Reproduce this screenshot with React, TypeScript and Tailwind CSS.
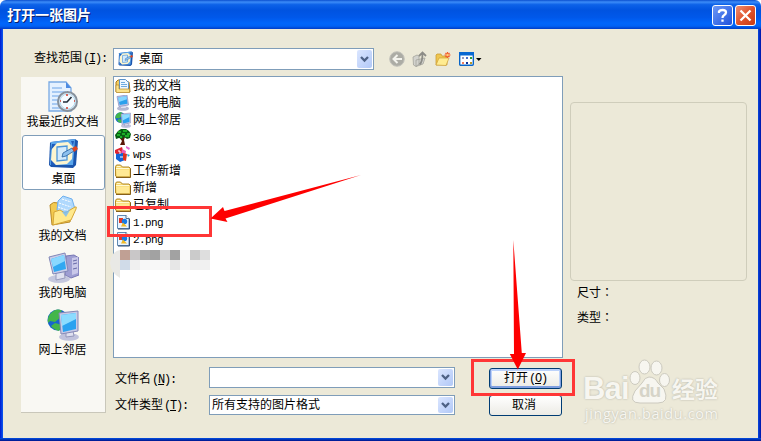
import type { ReactNode } from "react";

const CJK = "font-['Liberation_Sans','Noto_Sans_CJK_SC',sans-serif]";
const MONO = "font-['Liberation_Mono','Noto_Sans_CJK_SC',monospace] text-[11px] tracking-[-0.6px]";
const KEY = "font-['Liberation_Mono','Noto_Sans_CJK_SC',monospace] text-[12px] tracking-[-1.2px]";

function Key({ k, colon }: { k: string; colon?: boolean }) {
  return (
    <span className={`${KEY} ml-px`}>
      (<span className="underline underline-offset-1">{k}</span>){colon ? ":" : ""}
    </span>
  );
}

function DesktopIcon({ size }: { size: number }) {
  return (
    <svg width={size} height={size} viewBox="0 0 32 32">
      <path d="M3 4 27 1 30 3 28 27 25 30 3 29 1 27 2 5z" fill="#1b55ad" />
      <path d="M3 4 27 1 25 27 2 27z" fill="#5aa6ec" />
      <path d="M4 6h4l-5 6zM23 3h3l-1 5zM3 21l5 6H3z" fill="#1f5cbc" />
      <path d="M9 5 20 4l5 5-1 12-5 5-11 1-5-5 1-11z" fill="#fdf5cf" />
      <path d="M9 9l10-1v14L9 23z" fill="#d3eafc" stroke="#4b95da" strokeWidth="1.300" />
      <path d="m15 15-1 4 4-1 8-5-2-3z" fill="#8cc0ee" stroke="#24609f" strokeWidth=".8" />
      <path d="m24 10 4-2 2 3-4 3z" fill="#e0451f" />
    </svg>
  );
}

function RecentIcon() {
  return (
    <svg width="32" height="32" viewBox="0 0 32 32">
      <path d="M2 1h17l5 6v23H2z" fill="#e4f1ff" stroke="#78a9e4" strokeWidth="1.300" />
      <path d="m19 1 5 6h-5z" fill="#4d8be2" />
      <path d="M5 7h10M5 11h14M5 15h10M5 19h6M5 23h6M5 27h8" stroke="#93bdf0" strokeWidth="1.500" />
      <circle cx="20.500" cy="20.500" r="9.500" fill="#dceaf3" stroke="#87919c" strokeWidth="2" />
      <circle cx="20.500" cy="20.500" r="7.500" fill="#f5fbff" stroke="#b4d8ee" />
      <path d="m24.500 16-4.500 5h-4" stroke="#222d38" strokeWidth="1.600" fill="none" />
      <path d="M20 13v2M20 28v-2M13 20h1M28 20h-1" stroke="#d53a28" strokeWidth="1.500" />
    </svg>
  );
}

function DocsIcon() {
  return (
    <svg width="32" height="32" viewBox="0 0 32 32">
      <path d="M3 10q3-4 8-2l15 2-3 17-18 3z" fill="#f3ca50" stroke="#b98a27" />
      <path d="M16 1 25 4l3 10-9 9-9-8 1-9z" fill="#b0d9fd" stroke="#6fb0ee" />
      <path d="m15 4 9 3M12 8l12 4M11 12l12 4" stroke="#fff" strokeDasharray="2 1" />
      <path d="m7 17 6-2 5 3 10-6q2-1 1 2l-5 11L6 30z" fill="#ffe98c" stroke="#d6a637" />
      <path d="m15 17 8-2-4 7z" fill="#79bcf4" opacity=".85" />
    </svg>
  );
}

function ComputerIcon() {
  return (
    <svg width="32" height="32" viewBox="0 0 32 32">
      <path d="m19 4 8-1 5 3v17l-8 3-6-3z" fill="#9e9ed2" stroke="#7777b4" />
      <path d="m25 6 6-1v16l-6 2z" fill="#c9c8e9" />
      <path d="m26 9 4-1M26 12l4-1M26 17l4-1" stroke="#6769a7" />
      <ellipse cx="12" cy="27" rx="11" ry="4" fill="#c4c7de" />
      <path d="m9 20 8-1 1 7-9 2z" fill="#dfe1f0" stroke="#999cbd" />
      <path d="m2 5 16-4 3 18L6 22z" fill="#cbcde8" stroke="#8187b8" />
      <path d="m4 7 13-4 2 14L7 20z" fill="#31a8f1" />
      <path d="m4 7 13-4 1 6-12 6z" fill="#89d8ff" />
    </svg>
  );
}

function SmallComputerIcon() {
  return (
    <svg width="16" height="16" viewBox="0 0 16 16">
      <ellipse cx="8" cy="13.500" rx="6" ry="2.300" fill="#b3b7d2" />
      <path d="M6 9h4l1 4H6z" fill="#dcdff0" />
      <path d="m2 1.500 10-1.500 1.500 10L4 11.500z" fill="#c3c7e8" stroke="#8089c0" strokeWidth=".7" />
      <path d="m3 2.500 8.500-1.300 1 7.500L4.700 10z" fill="#2ba0ec" />
      <path d="m3 2.500 8.500-1.300.4 3L4 7z" fill="#86d6ff" />
    </svg>
  );
}

function NetworkIcon({ size }: { size: number }) {
  return (
    <svg width={size} height={size} viewBox="0 0 32 32">
      <circle cx="11" cy="11" r="10.500" fill="#1765ce" />
      <path d="M3 5Q10-2 15 2l-3 3 2 3-6 5-5-1-2 2q-1-5 2-9M8 14l7 2-3 6q-5-1-8-5z" fill="#43b64b" />
      <ellipse cx="22" cy="28" rx="10" ry="3.800" fill="#c0c2dc" />
      <path d="m19 23 7-1 1 5-8 1z" fill="#dfe0f0" stroke="#9497bb" />
      <path d="m12 4 19-2v20l-17 3z" fill="#c8cae6" stroke="#8588b6" />
      <path d="m14 6 15-2v16l-13 3z" fill="#2ba2f0" />
      <path d="m14 6 15-2v6l-14 7z" fill="#8cdcff" />
    </svg>
  );
}

function FolderIcon() {
  return (
    <svg width="16" height="16" viewBox="0 0 16 16">
      <path d="M.5 13V3.500l1-1.500h4l2 2H14l1.500 1.500V14H2z" fill="#f5d66c" stroke="#b38a2c" />
      <path d="M1 6.500h13V13H2z" fill="#ffe994" />
      <path d="M1 14.500h14.500V5.500" stroke="#86601a" fill="none" />
      <path d="M2 3.500h3.500M1 5.500h13" stroke="#fff9d4" />
    </svg>
  );
}

function FolderDocIcon() {
  return (
    <svg width="16" height="16" viewBox="0 0 16 16">
      <path d="M1 14V4l2-2h4l2 2h5l1 10z" fill="#f1cc61" stroke="#a8781b" />
      <path d="M4.500 1.500h6l3 3V12h-9z" fill="#eef7ff" stroke="#5b92c9" />
      <path d="M6 4.500h4M6 6.500h6M6 8.500h6" stroke="#6eaadf" />
      <path d="M1 14V7h3v4h10.500v3.500H2z" fill="#fbe28b" stroke="#b48a2c" strokeWidth=".7" />
    </svg>
  );
}

function TreeIcon() {
  return (
    <svg width="16" height="16" viewBox="0 0 16 16">
      <path d="M7 8h3l-1 3 1 5H5l2-4-3-4z" fill="#5a1606" />
      <path d="M3 2l3-2h5l3 2 2 3-1 4-3 1-3-2-2 2-3-1-3 1-1-4z" fill="#075d13" />
      <path d="M3 3h3M8 2h4M2 6h3M7 5h3M12 5h3M5 8h2M10 7h4" stroke="#24c82e" strokeWidth="1.400" />
    </svg>
  );
}

function WpsIcon() {
  return (
    <svg width="16" height="16" viewBox="0 0 16 16">
      <path d="m0 4 7-3 2 7-5 2-4-3z" fill="#df2430" />
      <path d="m7 3 4 2-1 5-4-1z" fill="#ec5bb4" />
      <path d="m11 0 4 2-1 2-3-2z" fill="#e46bd2" />
      <path d="m1 8 7-1 2 7-5 2-4-3z" fill="#1264d7" />
      <path d="m8 7 4 1-1 7-3-1z" fill="#dd321f" />
      <path d="m12 8 3 1-2 2z" fill="#20a8d6" />
      <path d="M3 5h2v3M5 11h3" stroke="#fff" fill="none" />
    </svg>
  );
}

function PngIcon() {
  return (
    <svg width="16" height="16" viewBox="0 0 16 16">
      <path d="M2.500 1.500H11l3 3v10H2.500z" fill="#e7f3ff" stroke="#608ab3" />
      <path d="M11 1v3.500h3.500" fill="#fff" stroke="#4e7192" />
      <path d="M4 4h4v5H4z" fill="#e53722" />
      <circle cx="9.500" cy="7.500" r="2.700" fill="#187ae5" />
      <path d="m6 12.500 2-4 4 4z" fill="#f1ba24" />
      <path d="M3 15h11.500V5" stroke="#334e75" fill="none" />
    </svg>
  );
}

function DropButton() {
  return (
    <div className="flex h-full w-[15px] items-center justify-center rounded-[2px] bg-linear-to-br from-[#dbe6ff] to-[#b1c8f7]">
      <svg width="9" height="7" viewBox="0 0 9 7">
        <path d="m1 1 3.500 3.500L8 1" fill="none" stroke="#4d6185" strokeWidth="2.300" />
      </svg>
    </div>
  );
}

function Place({ icon, name, active }: { icon: ReactNode; name: string; active?: boolean }) {
  return (
    <div className="h-[57px] pl-px">
      <div
        className={`flex h-[55px] flex-col items-center rounded-[3px] border ${
          active ? "w-[83px] border-[#7f9db9] bg-white" : "w-[81px] border-transparent"
        }`}
      >
        <div className="mt-[2px] h-8">{icon}</div>
        <span className="mt-px h-4 leading-4">{name}</span>
      </div>
    </div>
  );
}

const places = [
  { name: "我最近的文档", icon: <RecentIcon /> },
  { name: "桌面", icon: <DesktopIcon size={32} />, active: true },
  { name: "我的文档", icon: <DocsIcon /> },
  { name: "我的电脑", icon: <ComputerIcon /> },
  { name: "网上邻居", icon: <NetworkIcon size={32} /> },
];

const files = [
  { name: "我的文档", icon: <FolderDocIcon /> },
  { name: "我的电脑", icon: <SmallComputerIcon /> },
  { name: "网上邻居", icon: <NetworkIcon size={16} /> },
  { name: "360", icon: <TreeIcon />, latin: true },
  { name: "wps", icon: <WpsIcon />, latin: true },
  { name: "工作新增", icon: <FolderIcon /> },
  { name: "新增", icon: <FolderIcon /> },
  { name: "已复制", icon: <FolderIcon /> },
  { name: "1.png", icon: <PngIcon />, latin: true },
  { name: "2.png", icon: <PngIcon />, latin: true },
];

function TitleBar() {
  return (
    <header className="flex h-[29px] shrink-0 items-center justify-between rounded-t-[6px] bg-[linear-gradient(180deg,#0a4fcf_0%,#3c8cf8_7%,#0d62e8_16%,#0053e0_35%,#0058ea_60%,#0066fb_80%,#0062f5_90%,#003dc6_100%)] pr-[5px] pl-[7px]">
      <h1 className="text-[14px] leading-5 font-bold text-white [text-shadow:1px_1px_0_#0a1f6b]">打开一张图片</h1>
      <div className="mt-[2px] flex gap-[2px]">
        <div className="flex size-[21px] items-center justify-center rounded-[3px] border border-white bg-linear-to-br from-[#6d98f6] to-[#1f4fdc]">
          <svg width="13" height="15" viewBox="0 0 13 15" fill="none" stroke="#fff" strokeWidth="2.300">
            <path d="M3 5V3.500Q4 2 6.500 2 10 2 10 4.500 10 6 8 7.200 6.500 8 6.500 10M6.500 11.500v2.200" />
          </svg>
        </div>
        <div className="flex size-[21px] items-center justify-center rounded-[3px] border border-white bg-linear-to-br from-[#ee8d70] via-[#e0532c] to-[#c93a10]">
          <svg width="13" height="13" viewBox="0 0 13 13" stroke="#fff" strokeWidth="2.300">
            <path d="m1.500 1.500 10 10M11.500 1.500l-10 10" />
          </svg>
        </div>
      </div>
    </header>
  );
}

function LookInRow() {
  return (
    <div className="mt-[19px] ml-[30px] flex h-[22px] shrink-0 items-center">
      <div className="-mt-px w-20 pl-px">
        查找范围
        <Key k="I" colon />
      </div>
      <div className="flex h-[22px] w-[261px] items-center justify-between border border-[#7f9db9] bg-white p-px">
        <div className="flex items-center gap-1 pl-[3px]">
          <DesktopIcon size={16} />
          <span className="pl-px">桌面</span>
        </div>
        <DropButton />
      </div>
      <div className="ml-[15px] flex items-center gap-[7px]">
        <svg width="16" height="16" viewBox="0 0 16 16">
          <circle cx="8" cy="8" r="7.300" fill="#acaca5" stroke="#c2c2bb" />
          <path d="M13 8H5M8.500 4 4.500 8l4 4" stroke="#f3f3ed" strokeWidth="2" fill="none" />
        </svg>
        <svg width="16" height="16" viewBox="0 0 16 16">
          <path d="m1 6 4-2 2 1v8l-3 2.500-2.500-1.500zM4 9l9-2-2 6-7 2.500z" fill="#d2d2cd" stroke="#a3a39c" strokeWidth=".8" />
          <path d="M7.500 13.500q3-2 3-11M7 5l3.500-3.500L14 5" stroke="#8c8c87" strokeWidth="1.800" fill="none" />
        </svg>
        <svg width="17" height="16" viewBox="0 0 17 16">
          <path d="M1 14V4l1-1h4l1 2h5v9z" fill="#efc650" stroke="#c59628" strokeWidth=".7" />
          <path d="m1 14 3-7h10l-3 7.500z" fill="#ffec91" stroke="#cda13b" strokeWidth=".7" />
          <path d="M12.500 1v6M9.500 4h6M10.500 2l4 4M14.500 2l-4 4" stroke="#f15a29" strokeWidth="1.200" />
          <circle cx="12.500" cy="4" r="1.300" fill="#ffca73" />
        </svg>
        <svg width="23" height="16" viewBox="0 0 23 16">
          <rect x=".7" y="1.700" width="13.600" height="12.600" rx="1" fill="#fff" stroke="#0865c8" strokeWidth="1.400" />
          <path d="M0 1h15v3.500H0z" fill="#0868d2" />
          <path d="M3 6h2v2H3z" fill="#969bc0" />
          <path d="M7 6h2v2H7z" fill="#4a71c8" />
          <path d="M11 6h2v2h-2z" fill="#2c9c39" />
          <path d="M3 11h2v2H3z" fill="#ef7d5d" />
          <path d="M7 11h2v2H7z" fill="#103397" />
          <path d="M11 11h2v2h-2z" fill="#bd9824" />
          <path d="M17 7h5.500l-2.700 3z" fill="#000" />
        </svg>
      </div>
    </div>
  );
}

function FileList() {
  return (
    <ul className="h-[282px] border border-[#7f9db9] bg-white pl-px">
      {files.map((f) => (
        <li key={f.name} className="flex h-[17px] items-center gap-[2px] whitespace-nowrap">
          {f.icon}
          <span className={f.latin ? `${MONO} pt-[2px]` : "pt-px"}>{f.name}</span>
        </li>
      ))}
    </ul>
  );
}

function Watermark() {
  return (
    <div className="absolute top-[358px] left-[583px] h-16 w-[140px] text-[#f7f6f0] [text-shadow:0_0_2px_#aaa99f]">
      <span className="absolute top-[18px] left-0 text-[31px] leading-[26px] font-bold tracking-[-0.8px]">Bai</span>
      <svg className="absolute top-[1px] left-[46px]" width="42" height="46" viewBox="0 0 42 46" fill="#f7f6f0" stroke="#cccabf">
        <ellipse cx="6" cy="19" rx="5" ry="6.500" />
        <ellipse cx="15.500" cy="8" rx="5.500" ry="7" />
        <ellipse cx="27.500" cy="9" rx="5.500" ry="7" />
        <ellipse cx="35.500" cy="21" rx="5" ry="6.500" />
        <path d="M20 18q6 0 9 6l6 6q6 14-6 14H11Q-1 44 6 32l7-8q3-6 7-6z" />
      </svg>
      <span className="absolute top-[23px] left-[56px] text-[19px] leading-5 font-bold tracking-[-1px] text-[#d6d4c8] [text-shadow:none]">
        du
      </span>
      <span className="absolute top-[18px] left-[89px] text-[23px] leading-7 font-bold">经验</span>
      <span className="absolute top-[47px] left-[2px] font-['Open_Sans',sans-serif] text-[14.500px] leading-[18px] tracking-[0.6px]">
        jingyan.baidu.com
      </span>
    </div>
  );
}

const mosaic = [
  "bg-[#c0a094]", "bg-[#c9c7c8]", "bg-[#a9a9a9]", "bg-[#a2a2a2]", "bg-[#d2d2d2]",
  "bg-[#a2a2a2]", "bg-[#f9f9f9]", "bg-[#cbcbcb]", "bg-[#dedede]",
  "bg-[#d0dbe8]", "bg-[#f0f0f0]", "bg-[#f7f7f7]", "bg-[#f8f8f8]", "bg-[#f7f7f7]",
  "bg-[#e7e7e7]", "bg-[#f6f6f6]", "bg-[#f0f0f0]", "bg-[#f1f1f1]",
];

function Annotations() {
  return (
    <>
      <svg className="absolute top-[249px] left-[110px]" width="10" height="30" viewBox="0 0 10 30">
        <path d="M10 1Q1 3 0 14q1 10 10 15z" fill="#e9e9e6" />
      </svg>
      <div className="absolute top-[250px] left-[120px] grid w-[90px] grid-cols-9">
        {mosaic.map((c, i) => (
          <div key={i} className={`h-[10px] ${c}`} />
        ))}
      </div>
      <div className="absolute top-[206px] left-[107px] h-[31px] w-[105px] border-3 border-[#ff3636]" />
      <div className="absolute top-[359px] left-[471px] h-[37px] w-[104px] border-3 border-[#ff3636]" />
      <svg className="absolute top-0 left-0" width="761" height="441" fill="#fe0000">
        <path d="M210.500 218.500 223 207l1.500 4L361 175l-135.500 43.500 2 3.500z" />
        <path d="M513.300 240 514 354h-4.200l8 15.500 8.200-16.500h-4.200z" />
      </svg>
    </>
  );
}

export default function App() {
  return (
    <div className={`relative flex h-[441px] w-[761px] flex-col overflow-hidden text-[12px] leading-4 text-black ${CJK}`}>
      <TitleBar />
      <div className="flex flex-1 flex-col bg-[#0831d9] bg-[linear-gradient(90deg,#0019cf_0,#0a5af0_3px,#0a5af0_757px,#0014a8_761px)] px-[3px]">
        <main className="flex flex-1 flex-col bg-[#ece9d8]">
          <LookInRow />
          <div className="mt-[6px] ml-[18px] flex items-start">
            <nav className="mt-px h-[336px] w-[85px] border-r border-b border-[#c9c7ba] bg-[#f9f8f3] pt-px">
              {places.map((p) => (
                <Place key={p.name} {...p} />
              ))}
            </nav>
            <section className="ml-[7px] w-[450px]">
              <FileList />
              <div className="mt-[9px] flex h-[21px] items-center">
                <label className="w-24 pt-[3px] pl-[2px]">
                  文件名
                  <Key k="N" colon />
                </label>
                <div className="flex h-[21px] w-[246px] justify-end border border-[#7f9db9] bg-white p-px">
                  <DropButton />
                </div>
                <button className="mt-[2px] ml-[34px] h-[21px] w-[73px] rounded-[3px] border border-[#003c74] bg-linear-to-b from-white to-[#ecebe5] leading-[17px] shadow-[inset_0_-1px_0_1px_#7f9fe0,inset_0_0_0_2px_#bcd2fa]">
                  打开
                  <Key k="O" />
                </button>
              </div>
              <div className="mt-[7px] flex h-5 items-center">
                <label className="w-24 pl-[2px]">
                  文件类型
                  <Key k="T" colon />
                </label>
                <div className="flex h-5 w-[246px] items-center justify-between border border-[#7f9db9] bg-white p-px">
                  <span className="pl-px">所有支持的图片格式</span>
                  <DropButton />
                </div>
                <button className="mt-px ml-[34px] h-[21px] w-[73px] rounded-[3px] border border-[#003c74] bg-linear-to-b from-white to-[#ecebe5] pr-[3px] leading-[17px]">
                  取消
                </button>
              </div>
            </section>
            <aside className="mt-[26px] ml-[7px] w-[177px] font-['Liberation_Sans','Noto_Sans_CJK_TC',sans-serif]">
              <div className="h-[179px] rounded-[4px] border border-[#cfcdbb]" />
              <p className="mt-[4px] ml-[7px]">尺寸：</p>
              <p className="mt-[9px] ml-[7px]">类型：</p>
            </aside>
          </div>
        </main>
      </div>
      <footer className="h-[3px] shrink-0 bg-linear-to-b from-[#0650e4] to-[#00138c]" />
      <Watermark />
      <Annotations />
    </div>
  );
}
